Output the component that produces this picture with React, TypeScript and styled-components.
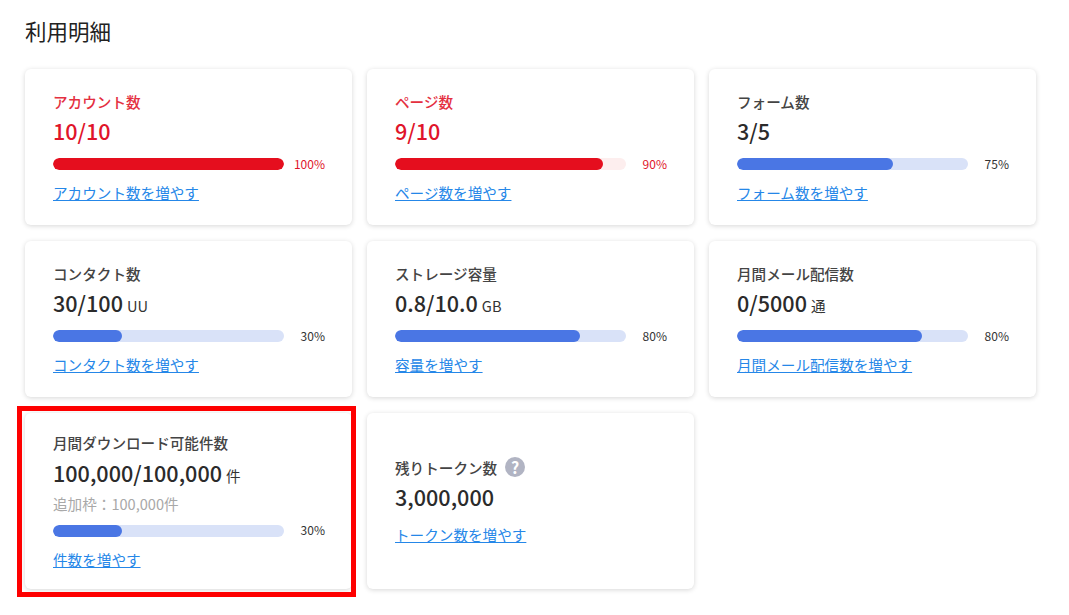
import { createGlobalStyle, styled } from "styled-components";

interface UsageItem {
	label: string;
	value: string;
	unit?: string;
	note?: string;
	percent?: number;
	fill?: number;
	link: string;
	danger?: boolean;
	help?: boolean;
	outlined?: boolean;
}

const items: UsageItem[] = [
	{ label: "アカウント数", value: "10/10", percent: 100, link: "アカウント数を増やす", danger: true },
	{ label: "ページ数", value: "9/10", percent: 90, link: "ページ数を増やす", danger: true },
	{ label: "フォーム数", value: "3/5", percent: 75, fill: 67.5, link: "フォーム数を増やす" },
	{ label: "コンタクト数", value: "30/100", unit: "UU", percent: 30, link: "コンタクト数を増やす" },
	{ label: "ストレージ容量", value: "0.8/10.0", unit: "GB", percent: 80, link: "容量を増やす" },
	{ label: "月間メール配信数", value: "0/5000", unit: "通", percent: 80, link: "月間メール配信数を増やす" },
	{
		label: "月間ダウンロード可能件数",
		value: "100,000/100,000",
		unit: "件",
		note: "追加枠：100,000件",
		percent: 30,
		link: "件数を増やす",
		outlined: true,
	},
	{ label: "残りトークン数", value: "3,000,000", link: "トークン数を増やす", help: true },
];

const App = () => {
	return (
		<>
			<GlobalStyle />
			<Page>
				<Title>利用明細</Title>
				<Grid>
					{items.map((el) => {
						return (
							<Card key={el.label}>
								<Label $danger={el.danger}>
									{el.label}
									{el.help && <HelpBadge>?</HelpBadge>}
								</Label>
								<Value $danger={el.danger}>
									{el.value}
									{el.unit && <Unit>{el.unit}</Unit>}
								</Value>
								{el.note && <Note>{el.note}</Note>}
								{el.percent !== undefined && (
									<BarRow>
										<Track $danger={el.danger}>
											<Fill $danger={el.danger} style={{ width: `${el.fill ?? el.percent}%` }} />
										</Track>
										<Percent $danger={el.danger}>{el.percent}%</Percent>
									</BarRow>
								)}
								<MoreLink href="#">{el.link}</MoreLink>
								{el.outlined && <Outline />}
							</Card>
						);
					})}
				</Grid>
			</Page>
		</>
	);
};

export default App;

const GlobalStyle = createGlobalStyle`
	html, body {
		margin: 0;
		padding: 0;
		background: #ffffff;
	}
	* {
		box-sizing: border-box;
	}
	body {
		font-family: "Noto Sans CJK JP", "Noto Sans", sans-serif;
		color: #262626;
	}
`;

const Page = styled.div`
	width: 1069px;
	height: 615px;
	padding: 16px 0 0 25px;
	overflow: hidden;
`;

const Title = styled.h2`
	margin: 0 0 24px;
	font-size: 21.5px;
	line-height: 29px;
	font-weight: 400;
	color: #222222;
`;

const Grid = styled.div`
	display: grid;
	grid-template-columns: repeat(3, 327px);
	grid-template-rows: 156px 156px 176px;
	column-gap: 15px;
	row-gap: 16px;
`;

const Card = styled.div`
	position: relative;
	display: flex;
	flex-direction: column;
	justify-content: center;
	padding: 0 27px 0 28px;
	background: #ffffff;
	border-radius: 6px;
	box-shadow: 0 1px 5px rgba(0, 0, 0, 0.16);
`;

const Label = styled.div<{ $danger?: boolean }>`
	display: flex;
	align-items: center;
	height: 20px;
	font-size: 14.6px;
	font-weight: 500;
	color: ${(props) => (props.$danger ? "#e4303f" : "#444444")};
`;

const HelpBadge = styled.span`
	display: inline-flex;
	align-items: center;
	justify-content: center;
	width: 20px;
	height: 20px;
	margin-left: 8px;
	border-radius: 50%;
	background: #b1b4c3;
	color: #ffffff;
	font-size: 16px;
	font-weight: 700;
`;

const Value = styled.div<{ $danger?: boolean }>`
	margin-top: 5px;
	height: 30px;
	line-height: 30px;
	font-size: 21.6px;
	font-weight: 500;
	color: ${(props) => (props.$danger ? "#e0142a" : "#2b2b2b")};
`;

const Unit = styled.span`
	margin-left: 4px;
	font-size: 14.6px;
	font-weight: 400;
	color: #333333;
`;

const Note = styled.div`
	margin: 6px 0 -1px;
	height: 20px;
	line-height: 20px;
	font-size: 14.6px;
	color: #a8a8a8;
`;

const BarRow = styled.div`
	display: flex;
	align-items: center;
	justify-content: space-between;
	margin-top: 12px;
	height: 12px;
`;

const Track = styled.div<{ $danger?: boolean }>`
	width: 231px;
	height: 12px;
	border-radius: 6px;
	overflow: hidden;
	background: ${(props) => (props.$danger ? "#fdeeee" : "#d9e2f8")};
`;

const Fill = styled.div<{ $danger?: boolean }>`
	height: 100%;
	border-radius: 6px;
	background: ${(props) => (props.$danger ? "#e50e1e" : "#4a76e4")};
`;

const Percent = styled.span<{ $danger?: boolean }>`
	margin-top: -1px;
	font-size: 12px;
	line-height: 12px;
	color: ${(props) => (props.$danger ? "#e0142a" : "#333333")};
`;

const MoreLink = styled.a`
	align-self: flex-start;
	margin-top: 13px;
	height: 20px;
	line-height: 20px;
	font-size: 14.6px;
	color: #2587e8;
	text-decoration: underline;
`;

const Outline = styled.div`
	position: absolute;
	top: -7px;
	left: -8px;
	width: 339px;
	height: 191px;
	border: 5px solid #fe0000;
	pointer-events: none;
`;
